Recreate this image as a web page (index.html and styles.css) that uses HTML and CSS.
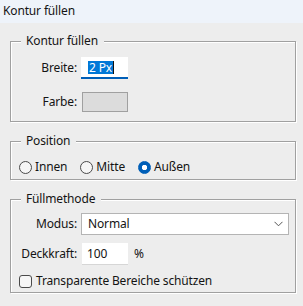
FILE: index.html
```html
<!DOCTYPE html>
<html>
<head>
    <meta http-equiv="Content-Type" content="text/html;charset=UTF-8"/>
    <title>Kontur füllen</title>
    <link rel="stylesheet" href="styles.css">
</head>
<body>
<div class="titlebar">Kontur füllen</div>
<div class="content">
    <section class="group group-stroke">
        <div class="group-title">Kontur füllen</div>
        <div class="form-grid">
            <label class="field-label" for="strokeWidth">Breite:</label>
            <div class="text-field width-field" id="strokeWidth"><span class="selected">2 Px</span><span class="caret"></span></div>
            <label class="field-label">Farbe:</label>
            <div class="swatch"></div>
        </div>
    </section>

    <section class="group group-position">
        <div class="group-title">Position</div>
        <div class="radio-row">
            <label class="radio-option"><input type="radio" name="position"> Innen</label>
            <label class="radio-option"><input type="radio" name="position"> Mitte</label>
            <label class="radio-option"><input type="radio" name="position" checked> Außen</label>
        </div>
    </section>

    <section class="group group-blend">
        <div class="group-title">Füllmethode</div>
        <div class="form-grid">
            <label class="field-label">Modus:</label>
            <div class="select">
                <span>Normal</span>
                <svg width="9" height="6" viewBox="0 0 9 6"><path d="M0.5 0.8 L4.5 4.8 L8.5 0.8" fill="none" stroke="#555" stroke-width="1"/></svg>
            </div>
            <label class="field-label">Deckkraft:</label>
            <div class="opacity-row">
                <div class="text-field opacity-field">100</div>
                <span class="unit">%</span>
            </div>
        </div>
        <label class="check-row"><input type="checkbox"> Transparente Bereiche schützen</label>
    </section>
</div>
</body>
</html>
```

FILE: styles.css
```css
* {
    box-sizing: border-box;
}

body {
    margin: 0;
    width: 303px;
    height: 306px;
    overflow: hidden;
    background-color: #ededed;
    font-family: "Noto Sans", "Segoe UI", sans-serif;
    font-size: 12px;
    line-height: 16px;
    letter-spacing: -0.15px;
    color: #141414;
}

.titlebar {
    height: 23px;
    padding: 3px 0 0 3px;
    background-color: #eef3fa;
}

.content {
    padding: 18px 7px 0 10px;
}

.group {
    border: 1px solid #a0a0a0;
    box-shadow: inset 1px 1px 0 #fff, 1px 1px 0 #fff;
    margin-bottom: 19px;
    padding-right: 7px;
}

.group-stroke {
    padding-bottom: 9px;
}

.group-position {
    padding-bottom: 4px;
}

.group-blend {
    padding-bottom: 3px;
}

.group-title {
    width: fit-content;
    height: 16px;
    margin: -9px 0 0 10px;
    padding: 0 6px 0 5px;
    background-color: #ededed;
}

.form-grid {
    display: grid;
    grid-template-columns: 66px auto;
    column-gap: 4px;
    align-items: center;
}

.group-stroke .form-grid {
    margin-top: 8px;
    row-gap: 13px;
}

.group-blend .form-grid {
    margin-top: 6px;
    row-gap: 8px;
}

.field-label {
    text-align: right;
}

.text-field {
    height: 22px;
    background-color: #fff;
    display: flex;
    align-items: center;
}

.width-field {
    width: 47px;
    padding-left: 7px;
    border-bottom: 2px solid #005fb8;
}

.selected {
    background-color: #0078d7;
    color: #fff;
    line-height: 13px;
    padding: 0 1px;
}

.caret {
    width: 1px;
    height: 13px;
    background-color: #111;
}

.swatch {
    width: 46px;
    height: 20px;
    margin-left: 1px;
    border: 1px solid #a0a0a0;
    background-color: #dcdcdc;
}

.radio-row {
    display: flex;
    align-items: center;
    margin: 10px 0 0 8px;
}

.radio-option {
    display: flex;
    align-items: center;
    gap: 3px;
    margin-right: 13px;
}

input[type="radio"],
input[type="checkbox"] {
    appearance: none;
    width: 13px;
    height: 13px;
    margin: 0;
    border: 1px solid #4a4a4a;
    background-color: #f6f6f6;
}

input[type="radio"] {
    border-radius: 50%;
}

input[type="radio"]:checked {
    border-color: #005fb8;
    background: radial-gradient(circle, #fff 0 2.4px, #005fb8 3px);
}

input[type="checkbox"] {
    border-radius: 3px;
}

.select {
    width: 208px;
    height: 22px;
    border: 1px solid #b4b4b4;
    background-color: #fff;
    display: flex;
    align-items: center;
    justify-content: space-between;
    padding: 0 5px 0 6px;
}

.opacity-row {
    display: flex;
    align-items: center;
    gap: 6px;
}

.opacity-field {
    width: 46px;
    margin-left: 1px;
    padding-left: 5px;
    border-bottom: 1px solid #d6d6d6;
}

.check-row {
    display: flex;
    align-items: center;
    gap: 4px;
    margin: 8px 0 0 8px;
}
```
